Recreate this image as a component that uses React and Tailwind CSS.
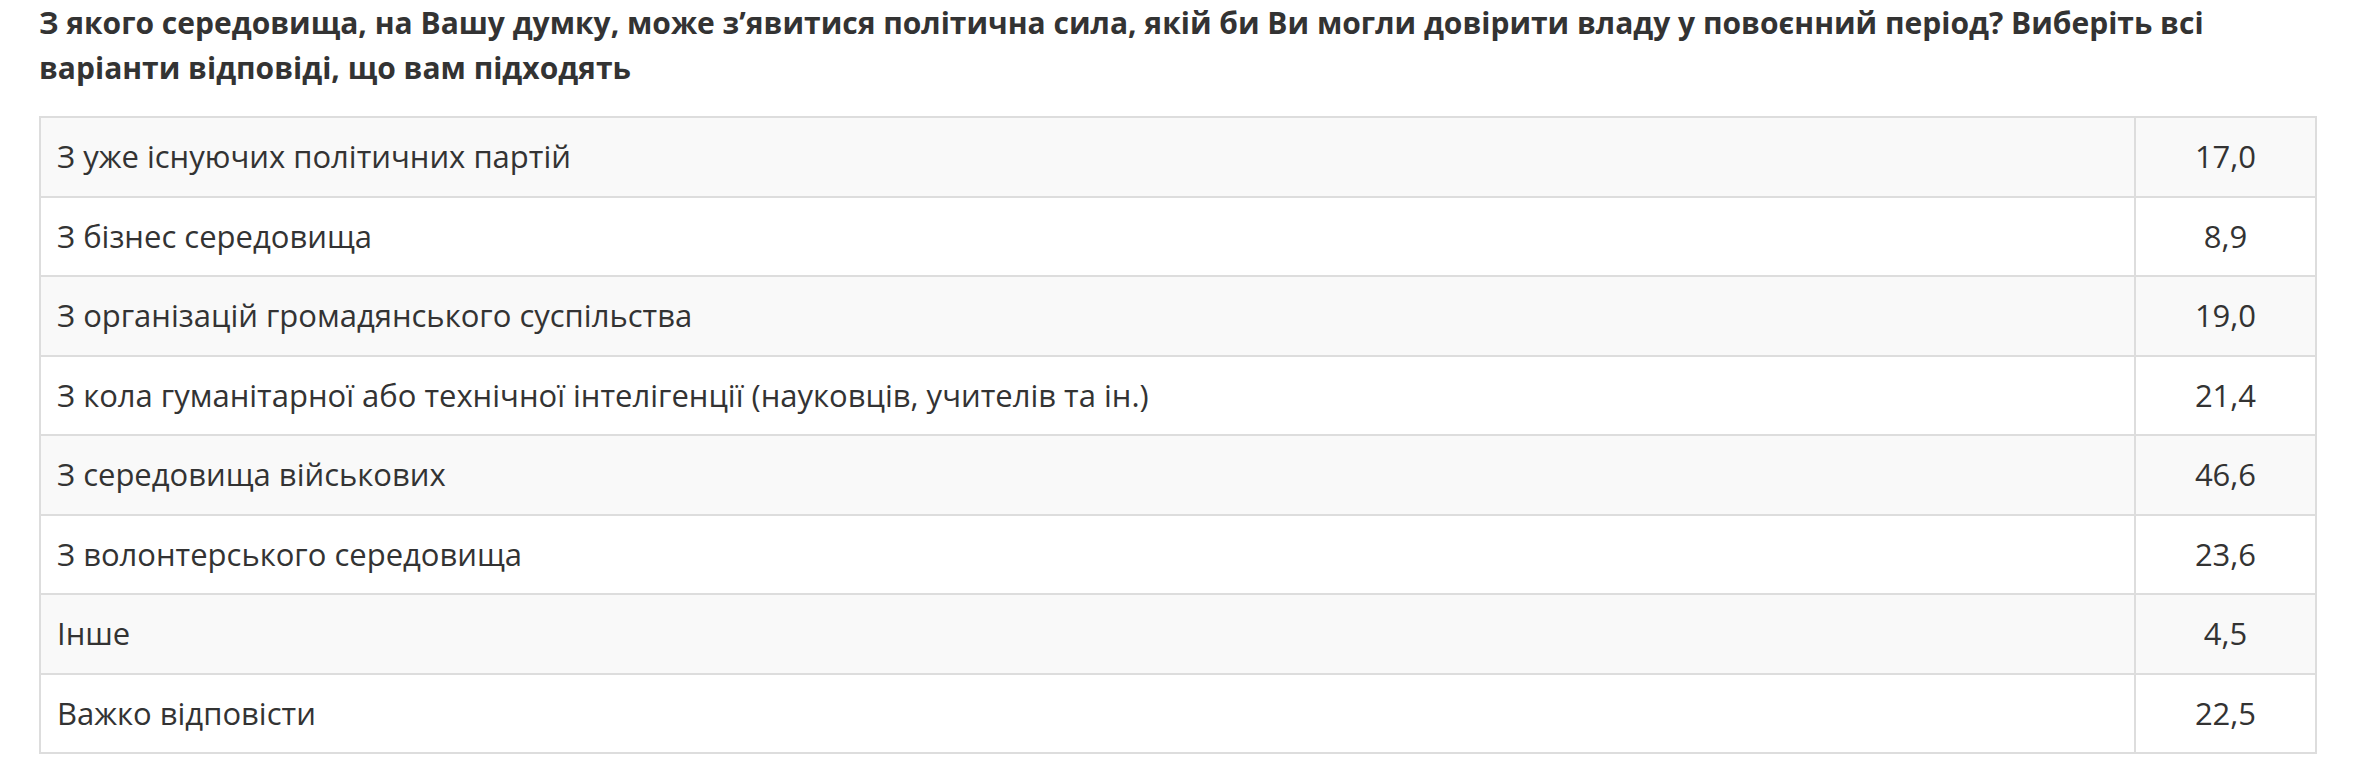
import React from 'react';

const rows = [
    { label: 'З уже існуючих політичних партій', value: '17,0' },
    { label: 'З бізнес середовища', value: '8,9' },
    { label: 'З організацій громадянського суспільства', value: '19,0' },
    { label: 'З кола гуманітарної або технічної інтелігенції (науковців, учителів та ін.)', value: '21,4' },
    { label: 'З середовища військових', value: '46,6' },
    { label: 'З волонтерського середовища', value: '23,6' },
    { label: 'Інше', value: '4,5' },
    { label: 'Важко відповісти', value: '22,5' },
];

const App = () => {
    return (
        <div className="bg-white min-h-[778px] pl-[39px] pr-[52px] text-[#333]">
            {/* Заголовок питання */}
            <h4
                className="text-[30px] leading-[45px] font-bold"
                style={{ fontFamily: '"Open Sans", "Noto Sans", sans-serif' }}
            >
                З якого середовища, на Вашу думку, може з’явитися політична сила, якій би Ви могли довірити владу у повоєнний період? Виберіть всі варіанти відповіді, що вам підходять
            </h4>

            {/* Таблиця відповідей */}
            <table
                className="mt-[26px] w-full border-collapse border-2 border-[#ddd] text-[31px] leading-[45.5px]"
                style={{ fontFamily: '"Open Sans", "Noto Sans", sans-serif' }}
            >
                <tbody>
                    {rows.map((row, i) => (
                        <tr key={row.label} className={i % 2 === 0 ? 'bg-[#f9f9f9]' : 'bg-white'}>
                            <td className="border-2 border-[#ddd] px-[16px] py-[16px]">{row.label}</td>
                            <td className="border-2 border-[#ddd] px-[16px] py-[16px] w-[181px] text-center">
                                {row.value}
                            </td>
                        </tr>
                    ))}
                </tbody>
            </table>
        </div>
    );
};

export default App;
